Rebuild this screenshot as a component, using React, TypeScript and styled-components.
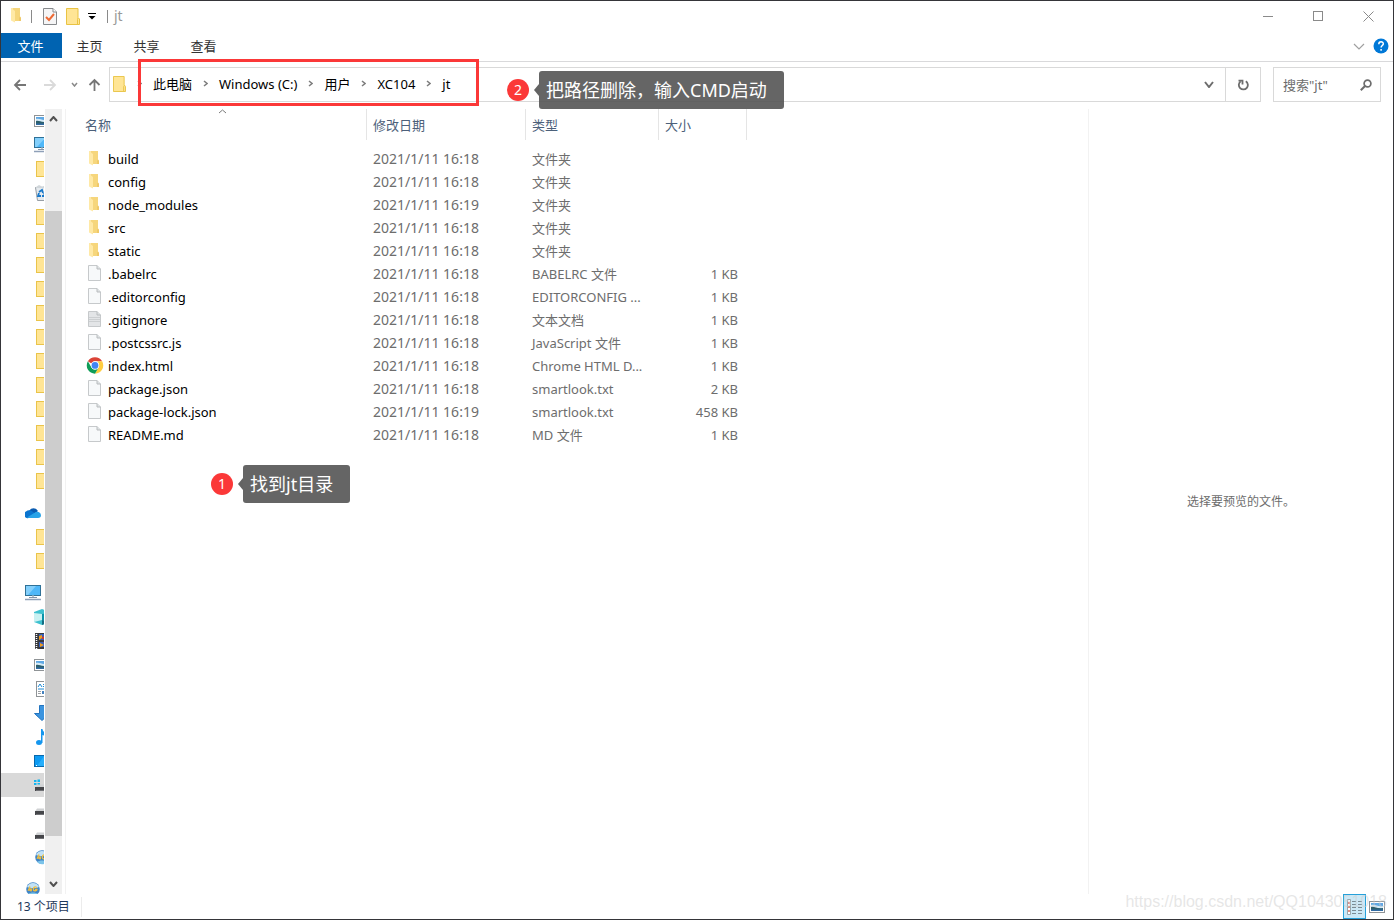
import React from "react";
import styled, { createGlobalStyle, css } from "styled-components";

const FONT = `"Noto Sans", "Noto Sans CJK SC", sans-serif`;

const GlobalStyle = createGlobalStyle`
  *, *::before, *::after { box-sizing: border-box; }
  body { margin: 0; background: #fff; color: #000; font: 13px/20px ${FONT}; }
  button, input { font: inherit; color: inherit; border: 0; padding: 0; margin: 0; background: none; }
  svg { display: block; flex: none; }
  ul, ol { list-style: none; margin: 0; padding: 0; }
`;

const Window = styled.div`
  position: relative;
  display: flex;
  flex-direction: column;
  height: 100vh;
  border: 1px solid #353539;
  background: #fff;
  overflow: hidden;
`;

/* ---------- title bar ---------- */

const TitleBar = styled.header`
  display: flex;
  align-items: center;
  flex: none;
  height: 32px;
  padding: 0 0 2px 7px;
`;

const QuickAccess = styled.div`
  display: flex;
  align-items: center;
`;

const IconButton = styled.button<{ $w: number }>`
  display: flex;
  align-items: center;
  justify-content: center;
  width: ${(p) => p.$w}px;
  height: 24px;
`;

const Divider = styled.span<{ $gap: number }>`
  width: 1px;
  height: 13px;
  margin: 0 ${(p) => p.$gap}px;
  background: #8a8a8a;
`;

const Title = styled.h1`
  margin: 0;
  font-size: 14px;
  line-height: 20px;
  font-weight: 400;
  color: #999;
`;

const WindowControls = styled.div`
  display: flex;
  margin-left: auto;
`;

/* ---------- ribbon ---------- */

const Ribbon = styled.nav`
  display: flex;
  align-items: center;
  flex: none;
  height: 29px;
  padding: 0 4px 4px 0;
  border-bottom: 1px solid #d9d9db;
`;

const Tab = styled.button<{ $primary?: boolean }>`
  width: 57px;
  height: 25px;
  padding: 2px 2px 0 0;
  line-height: 20px;
  color: #333;
  ${(p) =>
    p.$primary &&
    css`
      width: 61px;
      color: #fff;
      background: #0063b1;
    `}
`;

const RibbonEnd = styled.div`
  display: flex;
  align-items: center;
  margin-left: auto;
  padding-top: 2px;
`;

/* ---------- address row ---------- */

const AddressRow = styled.div`
  display: flex;
  align-items: center;
  flex: none;
  padding: 5px 12px 7px 8px;
`;

const AddressBar = styled.div`
  display: flex;
  align-items: center;
  flex: 1;
  height: 35px;
  margin-right: 12px;
  border: 1px solid #d9d9d9;
`;

const Crumbs = styled.ol`
  display: flex;
  align-items: center;
  flex: 1;
  padding: 0 0 2px 3px;
`;

const Crumb = styled.li`
  display: flex;
  align-items: center;
`;

const CrumbSeparator = styled.span`
  display: flex;
  justify-content: center;
  width: 27px;
`;

const RefreshButton = styled(IconButton)`
  height: 33px;
  border-left: 1px solid #d9d9d9;
`;

const SearchBox = styled.label`
  display: flex;
  align-items: center;
  width: 108px;
  height: 35px;
  padding: 0 8px 0 9px;
  border: 1px solid #d9d9d9;
`;

const SearchInput = styled.input`
  flex: 1;
  min-width: 0;
  height: 20px;
  outline: none;
  &::placeholder {
    color: #6d6d6d;
    opacity: 1;
  }
`;

/* ---------- navigation pane ---------- */

const Main = styled.main`
  display: flex;
  flex: 1;
  min-height: 0;
`;

const NavPane = styled.aside`
  display: flex;
  flex: none;
  width: 65px;
  border-right: 1px solid #f2f2f2;
`;

const NavTree = styled.ul`
  width: 43px;
  margin-right: 1px;
  overflow: hidden;
`;

const NavItem = styled.li<{ $root?: boolean; $selected?: boolean }>`
  display: flex;
  align-items: center;
  height: 24px;
  padding-left: ${(p) => (p.$root ? 24 : 33)}px;
  margin-top: ${(p) => (p.$root ? 8 : 0)}px;
  background: ${(p) => (p.$selected ? "#d9d9d9" : "transparent")};
`;

const ScrollBar = styled.div`
  display: flex;
  flex-direction: column;
  width: 17px;
  background: #f0f0f0;
`;

const ScrollTrack = styled.div`
  flex: 1;
  padding: 82px 0 38px;
`;

const ScrollThumb = styled.div`
  height: 100%;
  background: #cdcdcd;
`;

const ScrollButton = styled.button`
  display: flex;
  align-items: center;
  justify-content: center;
  height: 20px;
`;

/* ---------- file list ---------- */

const FilePane = styled.section`
  flex: 1;
  padding-left: 12px;
`;

const FileTable = styled.table`
  width: 669px;
  table-layout: fixed;
  border-collapse: separate;
  border-spacing: 0;

  tbody::before {
    content: "";
    display: block;
    height: 7px;
  }
`;

const HeadCell = styled.th`
  position: relative;
  height: 31px;
  padding: 0 6px;
  border-right: 1px solid #e5e5e5;
  color: #4c607a;
  font-weight: 400;
  text-align: left;

  &:first-child {
    padding-left: 7px;
  }
`;

const SortArrow = styled.span`
  position: absolute;
  top: 0;
  left: 50%;
  margin-left: -4px;
`;

const NameCell = styled.td`
  height: 23px;
  padding: 0 8px;
`;

const FileName = styled.span`
  display: flex;
  align-items: center;
  gap: 4px;
`;

const InfoCell = styled.td<{ $size?: 13 | 14; $right?: boolean }>`
  height: 23px;
  padding: 0 ${(p) => (p.$right ? 9 : 6)}px;
  font-size: ${(p) => p.$size ?? 13}px;
  color: #6d6d6d;
  text-align: ${(p) => (p.$right ? "right" : "left")};
  white-space: nowrap;
`;

const PreviewPane = styled.aside`
  display: flex;
  align-items: center;
  justify-content: center;
  flex: none;
  width: 305px;
  border-left: 1px solid #f2f2f2;
  font-size: 12px;
  color: #6d6d6d;
`;

/* ---------- status bar ---------- */

const StatusBar = styled.footer`
  display: flex;
  align-items: center;
  flex: none;
  height: 25px;
  padding: 0 5px 0 16px;
  color: #1e395b;
`;

const StatusCount = styled.span`
  padding-right: 11px;
  border-right: 1px solid #ececec;
  font-size: 12px;
`;

const ViewModes = styled.div`
  display: flex;
  margin-left: auto;
`;

const ViewButton = styled(IconButton)<{ $active?: boolean }>`
  height: 25px;
  border: 1px solid ${(p) => (p.$active ? "#26a0da" : "transparent")};
  background: ${(p) => (p.$active ? "#cbe8f6" : "transparent")};
`;

/* ---------- annotations over the window ---------- */

const Highlight = styled.div`
  position: absolute;
  left: 137px;
  top: 58px;
  width: 341px;
  height: 47px;
  border: 3px solid #fb3838;
`;

const Note = styled.div<{ $x: number; $y: number }>`
  position: absolute;
  left: ${(p) => p.$x}px;
  top: ${(p) => p.$y}px;
  display: flex;
  align-items: center;
`;

const NoteBadge = styled.span`
  width: 22px;
  height: 22px;
  margin-right: 5px;
  border-radius: 50%;
  background: #fb3838;
  color: #fff;
  font-size: 14px;
  line-height: 21px;
  text-align: center;
`;

const NoteText = styled.span`
  height: 38px;
  padding: 0 17px 0 7px;
  border-radius: 3px;
  background: rgba(80, 80, 80, 0.88);
  color: #fff;
  font-size: 18px;
  line-height: 38px;
  white-space: nowrap;
`;

const Watermark = styled.span`
  position: absolute;
  right: 6px;
  bottom: 7px;
  color: rgba(205, 205, 205, 0.5);
  font: 16px/20px "Liberation Sans", sans-serif;
`;

/* ---------- icons ---------- */

const Chevron = ({ dir, w, h, color, stroke = 1.5 }: { dir: "up" | "down" | "right"; w: number; h: number; color: string; stroke?: number }) => {
  const d =
    dir === "up"
      ? `M1 ${h - 1}L${w / 2} 1L${w - 1} ${h - 1}`
      : dir === "down"
      ? `M1 1L${w / 2} ${h - 1}L${w - 1} 1`
      : `M1 1L${w - 1} ${h / 2}L1 ${h - 1}`;
  return (
    <svg width={w} height={h} fill="none" stroke={color} strokeWidth={stroke}>
      <path d={d} />
    </svg>
  );
};

const Arrow = ({ dir, color }: { dir: "left" | "right" | "up"; color: string }) => (
  <svg width="14" height="14" fill="none" stroke={color} strokeWidth="1.8">
    <path d={dir === "left" ? "M13 7H2M7 2L2 7L7 12" : dir === "right" ? "M1 7H12M7 2L12 7L7 12" : "M7.500 13V2M2.500 7L7.500 2L12.500 7"} />
  </svg>
);

const FolderFlat = ({ w, h }: { w: number; h: number }) => (
  <svg width={w} height={h} viewBox="0 0 14 17" preserveAspectRatio="none">
    <path d="M.5.5H12V9.5L13.5 11V16.5H.5Z" fill="#ffe595" stroke="#e9c343" />
    <path d="M11.5 16V11.5L12 10" fill="none" stroke="#e9c343" />
  </svg>
);

const FolderOpen = () => (
  <svg width="18" height="18">
    <path d="M3 1H6V4H3Z" fill="#fbe6ae" />
    <path d="M5 1H12V10L13 11V14H5Z" fill="#f6d67c" />
    <path d="M3 1L7 4V15.500L3 13.500Z" fill="#ffe9a6" />
    <path d="M12 9.500L13 10.500V14H11V10.500Z" fill="#efc96a" />
  </svg>
);

const FileIcon = ({ lined }: { lined?: boolean }) => (
  <svg width="18" height="18">
    <path d="M2.500 .5H11L14.500 4V15.500H2.500Z" fill={lined ? "#e3e5e7" : "#f7f9fa"} stroke="#c6c9cb" />
    <path d="M11 .5V4H14.500" fill="#dfe2e4" stroke="#b9bcbe" />
    {lined && <path d="M3 6.500H14M3 8.500H14M3 10.500H14" stroke="#cccfd1" />}
  </svg>
);

const ChromeIcon = () => (
  <svg width="18" height="18" viewBox="0 0 48 48">
    <path d="M24 .5A22 22 0 0 1 43.050 11.500H24A11 11 0 0 0 14.500 17L5 11.500A22 22 0 0 1 24 .5Z" fill="#db4437" />
    <path d="M43.050 11.500A22 22 0 0 1 24 44.500L33.500 28A11 11 0 0 0 33.500 17L31 11.500Z" fill="#ffcd40" />
    <path d="M4.950 11.500A22 22 0 0 0 24 44.500L33.500 28A11 11 0 0 1 14.500 28Z" fill="#0f9d58" />
    <circle cx="24" cy="22.500" r="11" fill="#fff" />
    <circle cx="24" cy="22.500" r="9" fill="#4285f4" />
  </svg>
);

const PictureIcon = () => (
  <svg width="16" height="16">
    <rect x=".5" y="2.500" width="15" height="11" fill="#fff" stroke="#8f9396" />
    <rect x="2" y="4" width="12" height="8" fill="#5fa8e4" />
    <path d="M2 6C6 5 9 8 14 7V9H2Z" fill="#d5ebf7" />
    <path d="M2 8C5 7 8 10 14 9V12H2Z" fill="#2d5f6c" />
    <path d="M2 10.500H14V12H2Z" fill="#316ba3" />
  </svg>
);

const MonitorIcon = () => (
  <svg width="16" height="16">
    <rect x=".5" y=".5" width="15" height="10" fill="#4fb7f8" stroke="#2f7197" />
    <path d="M1 1H11L3 10H1Z" fill="#83cffb" />
    <path d="M4 12.500H12" stroke="#8494a8" />
    <path d="M7 10.500H9V12H7Z" fill="#b9c6d2" />
    <path d="M0 14.500H16" stroke="#8fa0b8" strokeWidth="1.500" />
  </svg>
);

const NavFolder = () => (
  <svg width="16" height="16">
    <rect x="2.500" y=".5" width="13" height="15" fill="#ffe595" stroke="#eac44a" />
  </svg>
);

const BinIcon = () => (
  <svg width="16" height="16">
    <path d="M1.500 2.500H14L12.500 15.500H3.500Z" fill="#e5eaee" stroke="#979ea5" />
    <path d="M2 2L5 0L8 1.500L12 .5L14 3H2Z" fill="#d0d6da" />
    <path d="M5 7L8 5L9 8M5 8L4 11H7M8 11H11L10 8" fill="none" stroke="#1979ca" strokeWidth="1.800" />
  </svg>
);

const CloudIcon = () => (
  <svg width="16" height="12">
    <path d="M4 4A5 5 0 0 1 13 4L8 8Z" fill="#0a5bb0" />
    <path d="M3.500 11A3.500 3.500 0 0 1 1 4.500C3 2.500 6 3 8 5L14 9L12 11Z" fill="#0b74cf" />
    <path d="M2 10.500L10 5.500C12 4 16 5 16 8.500C16 10 15 11 13 11H4Z" fill="#28a3e8" />
  </svg>
);

const CubeIcon = () => (
  <svg width="16" height="16">
    <path d="M0 3L8 0L16 3V13L8 16L0 13Z" fill="#3fc1cf" />
    <path d="M0 4L8 5V11L0 13Z" fill="#c9f1f2" />
    <path d="M8 5L16 4V13L8 11Z" fill="#0b93a8" />
    <path d="M8 11L16 13L8 16Z" fill="#156d83" />
  </svg>
);

const VideoIcon = () => (
  <svg width="16" height="16">
    <rect x="1" width="15" height="16" fill="#38393d" />
    <path d="M2.500 1V16" stroke="#fff" strokeDasharray="1 1" strokeWidth="1.500" />
    <path d="M5 1H16V7H5ZM5 9H16V14H5Z" fill="#3460bd" />
    <path d="M5 3L8 2V5L5 7ZM6 10L10 12L6 14Z" fill="#ef9b1d" />
    <path d="M8 4L11 3V6H8ZM9 9H11V11Z" fill="#cc3a2e" />
  </svg>
);

const DocIcon = () => (
  <svg width="16" height="16">
    <rect x="2.500" y=".5" width="13" height="15" fill="#fff" stroke="#8f9396" />
    <path d="M4 6L6 3L8 6M9 3.500H14M9 5.500H14M4 8H14" fill="none" stroke="#1c8ad6" />
    <path d="M4 10.500H7M4 12.500H7" stroke="#9da1a5" />
    <path d="M8 10H14V13H8Z" fill="#4382c0" />
  </svg>
);

const DownloadIcon = () => (
  <svg width="16" height="16">
    <path d="M5.500 .5H10.500V8.500H15.500L8 15.500L.5 8.500H5.500Z" fill="#3b94df" stroke="#2374bf" />
  </svg>
);

const MusicIcon = () => (
  <svg width="16" height="16">
    <ellipse cx="5" cy="13.500" rx="3" ry="2.500" fill="#1496ee" />
    <path d="M7 0H8.500C9 4 14 4 12 9C12 7 9 6 8.500 6V14H7Z" fill="#1496ee" />
  </svg>
);

const DesktopIcon = () => (
  <svg width="16" height="16">
    <rect x=".5" y="2.500" width="15" height="11" fill="#0c9bf3" stroke="#0868ab" />
    <path d="M10 3L3 13H15V3Z" fill="#26aefb" />
    <path d="M2 12.500H3" stroke="#fff" />
  </svg>
);

const DriveIcon = ({ system }: { system?: boolean }) => (
  <svg width="16" height="16">
    {system && <path d="M0 3H2.500V5H0ZM3.500 2.500H6V5H3.500ZM0 6H2.500V8H0ZM3.500 6H6V8.500H3.500Z" fill="#12b5f0" />}
    <path d="M3 7.500H13L16 10.500H1Z" fill="#d0d2d4" />
    <path d="M1 10H16V14H1Z" fill="#45464a" />
    <path d="M2 13.500H15" stroke="#717276" />
  </svg>
);

const GlobeIcon = () => (
  <svg width="16" height="16">
    <circle cx="8" cy="8" r="6.800" fill="#3f84c6" />
    <path d="M2 6A6.500 6.500 0 0 1 14 6C10 8 5 7 2 6Z" fill="#c2e2f6" />
    <path d="M3 13A6.500 6.500 0 0 0 13 13C10 11 6 11 3 13Z" fill="#7cc4ea" />
    <path d="M5 5.500L3.500 9H7M6 7V10.500M12 6.500C9 5 8 7 8.500 9C9 10.500 12 10 12 8.500H10" fill="none" stroke="#f3bf3e" strokeWidth="1.300" />
  </svg>
);

const CheckNoteIcon = () => (
  <svg width="14" height="17">
    <path d="M.5.5H10L13.500 4V16.500H.5Z" fill="#f5f5f6" stroke="#86898c" />
    <path d="M10 .5V4H13.500" fill="#fff" stroke="#86898c" />
    <path d="M3 9L6 12L11 6" fill="none" stroke="#ed6a35" strokeWidth="2" />
  </svg>
);

const QuickMenuIcon = () => (
  <svg width="8" height="7">
    <path d="M0 .5H8" stroke="#000" />
    <path d="M.5 3H7.500L4 6.500Z" fill="#000" />
  </svg>
);

const RefreshIcon = () => (
  <svg width="12" height="12" fill="none" stroke="#6d6d6d" strokeWidth="1.800">
    <path d="M8.800 2.200A4.500 4.500 0 1 1 3.600 2.400" />
    <path d="M1.500 1.700H5.500V5.500" />
  </svg>
);

const SearchIcon = () => (
  <svg width="12" height="12" fill="none" stroke="#6d6d6d">
    <circle cx="7.500" cy="4.500" r="3.400" strokeWidth="1.700" />
    <path d="M5 7L.8 11.200" strokeWidth="2" />
  </svg>
);

const HelpIcon = () => (
  <svg width="16" height="16">
    <circle cx="8" cy="8" r="7.500" fill="#0078d7" />
    <path d="M5.800 6.200C5.800 3 10.400 3.200 10.300 5.900C10.200 7.500 8.100 7.700 8.100 9.600M8.100 11V12.700" fill="none" stroke="#fff" strokeWidth="1.500" />
  </svg>
);

const DetailsIcon = () => (
  <svg width="16" height="16">
    <path d="M.5.5H3.500V15.500H.5Z" fill="#fff" stroke="#9aa7ad" />
    <path d="M1 4H3M1 8H3M1 12H3" stroke="#d46a58" strokeWidth="1.500" />
    <path d="M5 2.500H9M11 2.500H15M5 5.500H9M11 5.500H15M5 8.500H9M11 8.500H15M5 11.500H9M11 11.500H15M5 14.500H9M11 14.500H15" stroke="#7b8b94" />
  </svg>
);

/* ---------- data ---------- */

type NavEntry = { label: string; icon: React.ReactNode; root?: boolean; selected?: boolean };

const folders = (n: number): NavEntry[] => Array.from({ length: n }, () => ({ label: "文件夹", icon: <NavFolder /> }));

const NAV: NavEntry[] = [
  { label: "图片", icon: <PictureIcon /> },
  { label: "桌面", icon: <MonitorIcon /> },
  ...folders(1),
  { label: "回收站", icon: <BinIcon /> },
  ...folders(12),
  { label: "OneDrive", icon: <CloudIcon />, root: true },
  ...folders(2),
  { label: "此电脑", icon: <MonitorIcon />, root: true },
  { label: "3D 对象", icon: <CubeIcon /> },
  { label: "视频", icon: <VideoIcon /> },
  { label: "图片", icon: <PictureIcon /> },
  { label: "文档", icon: <DocIcon /> },
  { label: "下载", icon: <DownloadIcon /> },
  { label: "音乐", icon: <MusicIcon /> },
  { label: "桌面", icon: <DesktopIcon /> },
  { label: "Windows (C:)", icon: <DriveIcon system />, selected: true },
  { label: "D:", icon: <DriveIcon /> },
  { label: "E:", icon: <DriveIcon /> },
  { label: "4G", icon: <GlobeIcon /> },
  { label: "4G", icon: <GlobeIcon />, root: true },
];

type Kind = "folder" | "file" | "text" | "chrome";

const ICONS: Record<Kind, React.ReactNode> = {
  folder: <FolderOpen />,
  file: <FileIcon />,
  text: <FileIcon lined />,
  chrome: <ChromeIcon />,
};

const FILES: [Kind, string, string, string, string][] = [
  ["folder", "build", "2021/1/11 16:18", "文件夹", ""],
  ["folder", "config", "2021/1/11 16:18", "文件夹", ""],
  ["folder", "node_modules", "2021/1/11 16:19", "文件夹", ""],
  ["folder", "src", "2021/1/11 16:18", "文件夹", ""],
  ["folder", "static", "2021/1/11 16:18", "文件夹", ""],
  ["file", ".babelrc", "2021/1/11 16:18", "BABELRC 文件", "1 KB"],
  ["file", ".editorconfig", "2021/1/11 16:18", "EDITORCONFIG ...", "1 KB"],
  ["text", ".gitignore", "2021/1/11 16:18", "文本文档", "1 KB"],
  ["file", ".postcssrc.js", "2021/1/11 16:18", "JavaScript 文件", "1 KB"],
  ["chrome", "index.html", "2021/1/11 16:18", "Chrome HTML D...", "1 KB"],
  ["file", "package.json", "2021/1/11 16:18", "smartlook.txt", "2 KB"],
  ["file", "package-lock.json", "2021/1/11 16:19", "smartlook.txt", "458 KB"],
  ["file", "README.md", "2021/1/11 16:18", "MD 文件", "1 KB"],
];

const PATH = ["此电脑", "Windows (C:)", "用户", "XC104", "jt"];

export default function App() {
  return (
    <>
      <GlobalStyle />
      <Window>
        <TitleBar>
          <QuickAccess>
            <FolderOpen />
            <Divider $gap={5} />
            <IconButton $w={26} aria-label="属性"><CheckNoteIcon /></IconButton>
            <IconButton $w={20} aria-label="新建文件夹"><FolderFlat w={14} h={17} /></IconButton>
            <IconButton $w={18} aria-label="自定义快速访问工具栏"><QuickMenuIcon /></IconButton>
            <Divider $gap={6} />
          </QuickAccess>
          <Title>jt</Title>
          <WindowControls>
            <IconButton $w={50} aria-label="最小化">
              <svg width="10" height="11"><path d="M0 5.500H10" stroke="#8a8a8a" /></svg>
            </IconButton>
            <IconButton $w={50} aria-label="最大化">
              <svg width="10" height="10"><rect x=".5" y=".5" width="9" height="9" fill="none" stroke="#8a8a8a" /></svg>
            </IconButton>
            <IconButton $w={50} aria-label="关闭">
              <svg width="11" height="11"><path d="M.5.5L10.500 10.500M10.500.5L.5 10.500" stroke="#8a8a8a" /></svg>
            </IconButton>
          </WindowControls>
        </TitleBar>

        <Ribbon aria-label="功能区">
          <Tab $primary>文件</Tab>
          <Tab>主页</Tab>
          <Tab>共享</Tab>
          <Tab>查看</Tab>
          <RibbonEnd>
            <IconButton $w={28} aria-label="展开功能区"><Chevron dir="down" w={12} h={7} color="#a0a0a0" stroke={1.2} /></IconButton>
            <IconButton $w={16} aria-label="帮助"><HelpIcon /></IconButton>
          </RibbonEnd>
        </Ribbon>

        <AddressRow>
          <IconButton $w={22} aria-label="后退"><Arrow dir="left" color="#767676" /></IconButton>
          <IconButton $w={38} aria-label="前进"><Arrow dir="right" color="#dadada" /></IconButton>
          <IconButton $w={10} aria-label="最近位置"><Chevron dir="down" w={7} h={5} color="#8a8a8a" /></IconButton>
          <IconButton $w={30} aria-label="上移"><Arrow dir="up" color="#767676" /></IconButton>
          <AddressBar>
            <Crumbs>
              <Crumb><FolderFlat w={13} h={16} /></Crumb>
              {PATH.map((name) => (
                <Crumb key={name}>
                  <CrumbSeparator><Chevron dir="right" w={5} h={7} color="#7d7d7d" /></CrumbSeparator>
                  {name}
                </Crumb>
              ))}
            </Crumbs>
            <IconButton $w={32} aria-label="以前的位置"><Chevron dir="down" w={10} h={7} color="#6d6d6d" stroke={2} /></IconButton>
            <RefreshButton $w={35} aria-label="刷新"><RefreshIcon /></RefreshButton>
          </AddressBar>
          <SearchBox>
            <SearchInput type="text" aria-label="搜索" placeholder={'搜索"jt"'} />
            <SearchIcon />
          </SearchBox>
        </AddressRow>

        <Main>
          <NavPane>
            <NavTree>
              {NAV.map((n, i) => (
                <NavItem key={i} $root={n.root} $selected={n.selected} aria-label={n.label}>{n.icon}</NavItem>
              ))}
            </NavTree>
            <ScrollBar>
              <ScrollButton aria-label="向上滚动"><Chevron dir="up" w={9} h={6} color="#505050" stroke={2} /></ScrollButton>
              <ScrollTrack><ScrollThumb /></ScrollTrack>
              <ScrollButton aria-label="向下滚动"><Chevron dir="down" w={9} h={6} color="#505050" stroke={2} /></ScrollButton>
            </ScrollBar>
          </NavPane>

          <FilePane>
            <FileTable>
              <colgroup>
                <col width="289" />
                <col width="159" />
                <col width="133" />
                <col width="88" />
              </colgroup>
              <thead>
                <tr>
                  <HeadCell scope="col">
                    <SortArrow><Chevron dir="up" w={9} h={5} color="#7a7a7a" stroke={1} /></SortArrow>
                    名称
                  </HeadCell>
                  <HeadCell scope="col">修改日期</HeadCell>
                  <HeadCell scope="col">类型</HeadCell>
                  <HeadCell scope="col">大小</HeadCell>
                </tr>
              </thead>
              <tbody>
                {FILES.map(([kind, name, date, type, size]) => (
                  <tr key={name}>
                    <NameCell><FileName>{ICONS[kind]}{name}</FileName></NameCell>
                    <InfoCell $size={14}>{date}</InfoCell>
                    <InfoCell>{type}</InfoCell>
                    <InfoCell $right>{size}</InfoCell>
                  </tr>
                ))}
              </tbody>
            </FileTable>
          </FilePane>

          <PreviewPane>选择要预览的文件。</PreviewPane>
        </Main>

        <StatusBar>
          <StatusCount>13 个项目</StatusCount>
          <ViewModes>
            <ViewButton $w={23} $active aria-label="详细信息"><DetailsIcon /></ViewButton>
            <ViewButton $w={22} aria-label="大图标"><PictureIcon /></ViewButton>
          </ViewModes>
        </StatusBar>

        <Highlight />
        <Note $x={506} $y={70}>
          <NoteBadge>2</NoteBadge>
          <svg width="5" height="12"><path d="M5 0V12L0 6Z" fill="#636363" /></svg>
          <NoteText>把路径删除，输入CMD启动</NoteText>
        </Note>
        <Note $x={210} $y={464}>
          <NoteBadge>1</NoteBadge>
          <svg width="5" height="12"><path d="M5 0V12L0 6Z" fill="#636363" /></svg>
          <NoteText>找到jt目录</NoteText>
        </Note>
        <Watermark>https://blog.csdn.net/QQ1043051018</Watermark>
      </Window>
    </>
  );
}
